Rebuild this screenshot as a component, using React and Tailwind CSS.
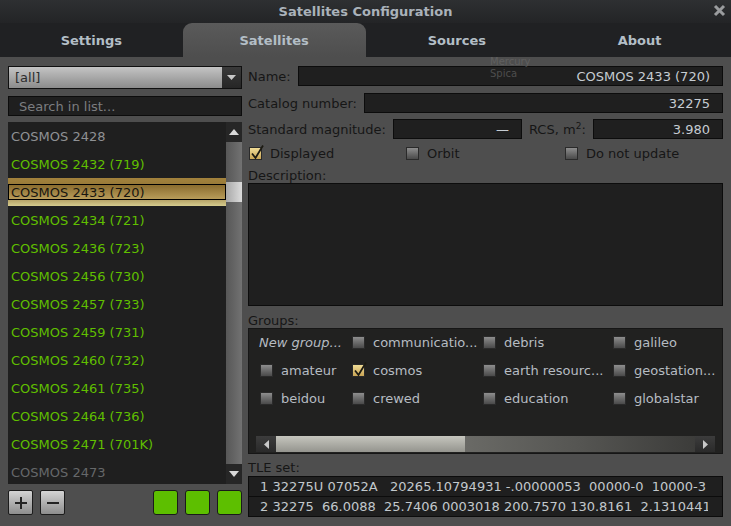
import React from 'react';

const satellites = [
  { name: 'COSMOS 2428', tone: 'grey' },
  { name: 'COSMOS 2432 (719)', tone: 'green' },
  { name: 'COSMOS 2433 (720)', tone: 'selected' },
  { name: 'COSMOS 2434 (721)', tone: 'green' },
  { name: 'COSMOS 2436 (723)', tone: 'green' },
  { name: 'COSMOS 2456 (730)', tone: 'green' },
  { name: 'COSMOS 2457 (733)', tone: 'green' },
  { name: 'COSMOS 2459 (731)', tone: 'green' },
  { name: 'COSMOS 2460 (732)', tone: 'green' },
  { name: 'COSMOS 2461 (735)', tone: 'green' },
  { name: 'COSMOS 2464 (736)', tone: 'green' },
  { name: 'COSMOS 2471 (701K)', tone: 'green' },
  { name: 'COSMOS 2473', tone: 'dim' },
];

const groups = [
  { label: 'New group...', italic: true },
  { label: 'communicatio...' },
  { label: 'debris' },
  { label: 'galileo' },
  { label: 'amateur' },
  { label: 'cosmos', checked: true },
  { label: 'earth resourc...' },
  { label: 'geostation...' },
  { label: 'beidou' },
  { label: 'crewed' },
  { label: 'education' },
  { label: 'globalstar' },
];

const tle = [
  '1 32275U 07052A   20265.10794931 -.00000053  00000-0  10000-3',
  '2 32275  66.0088  25.7406 0003018 200.7570 130.8161  2.13104411',
];

const CheckBox = ({ checked }) => (
  <div
    className={
      'relative w-[13px] h-[13px] shrink-0 border border-[#2a2a2a] ' +
      (checked
        ? 'bg-gradient-to-b from-[#f0dc96] to-[#c9a554]'
        : 'bg-gradient-to-b from-[#8e8e8e] to-[#4a4a4a]')
    }
  >
    {checked && (
      <svg className="absolute -top-[4px] left-0" width="15" height="17" viewBox="0 0 15 17">
        <path d="M2 9.5 L5.5 14 L13 1.5" fill="none" stroke="#1c1a12" strokeWidth="1.8" />
      </svg>
    )}
  </div>
);

const Field = ({ children, className = '' }) => (
  <div
    className={
      'h-[20px] bg-[#1f1f1f] border border-[#0c0c0c] text-[#c6ccd2] flex items-center justify-end pr-[12px] ' +
      className
    }
  >
    {children}
  </div>
);

const SatelliteList = () => (
  <div className="mt-[6px] h-[362px] flex">
    <div className="flex-1 bg-[#1f1f1f] overflow-hidden">
      {satellites.map((s) =>
        s.tone === 'selected' ? (
          <div
            key={s.name}
            className="h-[28px] flex items-center bg-gradient-to-b from-[#a2823c] via-[#8e7236] to-[#d6cc8e]"
          >
            <div className="w-full h-[16px] border border-black flex items-center pl-[2px] text-[#171510] bg-gradient-to-b from-[#8a6c2e] to-[#b89c5a]">
              {s.name}
            </div>
          </div>
        ) : (
          <div
            key={s.name}
            className={
              'h-[28px] flex items-center pl-[3px] ' +
              (s.tone === 'green'
                ? 'text-[#60bf00]'
                : s.tone === 'grey'
                ? 'text-[#8f9194]'
                : 'text-[#66686a]')
            }
          >
            {s.name}
          </div>
        )
      )}
    </div>
    <div className="w-[16px] flex flex-col bg-gradient-to-r from-[#575757] to-[#727272]">
      <div className="h-[20px] bg-[#262626] flex items-center justify-center">
        <svg width="10" height="6" viewBox="0 0 10 6">
          <path d="M0 6 L5 0 L10 6 Z" fill="#d8d8d8" />
        </svg>
      </div>
      <div className="h-[40px]" />
      <div className="h-[20px] bg-gradient-to-r from-[#a8a8a8] to-[#dcdcdc]" />
      <div className="flex-1" />
      <div className="h-[20px] bg-[#262626] flex items-center justify-center">
        <svg width="10" height="6" viewBox="0 0 10 6">
          <path d="M0 0 L5 6 L10 0 Z" fill="#d8d8d8" />
        </svg>
      </div>
    </div>
  </div>
);

export default function App() {
  const tabs = ['Settings', 'Satellites', 'Sources', 'About'];

  return (
    <div className="w-[731px] h-[526px] flex flex-col overflow-hidden bg-[#4e4e4e] font-['DejaVu_Sans',sans-serif] text-[13px] leading-none">
      {/* title bar */}
      <div className="relative h-[23px] shrink-0 flex items-center justify-center bg-gradient-to-b from-[#2e3032] to-[#232426]">
        <span className="font-bold text-[#aab2ba]">Satellites Configuration</span>
        <svg className="absolute right-[5px] top-[4px]" width="13" height="13" viewBox="0 0 13 13">
          <path d="M2 2 L11 11 M11 2 L2 11" stroke="#9a9c9e" strokeWidth="3" />
        </svg>
      </div>

      {/* tabs */}
      <div className="h-[34px] shrink-0 flex bg-[#202123]">
        {tabs.map((t) => (
          <div
            key={t}
            className={
              'flex-1 flex items-center justify-center font-bold text-[#b3bec6] ' +
              (t === 'Satellites'
                ? 'rounded-t-[9px] bg-gradient-to-b from-[#5a5a5a] to-[#4e4e4e]'
                : '')
            }
          >
            {t}
          </div>
        ))}
      </div>

      {/* content */}
      <div className="relative flex-1 flex gap-[6px] px-[8px] pt-[9px]">
        <span className="absolute left-[490px] top-[0px] text-[10px] text-[#6c6c6c] opacity-60">Mercury</span>
        <span className="absolute left-[490px] top-[12px] text-[10px] text-[#6c6c6c] opacity-60">Spica</span>

        {/* left column */}
        <div className="w-[234px] flex flex-col">
          <div className="h-[23px] flex border border-[#101010]">
            <div className="flex-1 flex items-center pl-[6px] text-[#2c2c2c] bg-gradient-to-b from-[#c4c4c4] to-[#8c8c8c]">
              [all]
            </div>
            <div className="w-[19px] flex items-center justify-center bg-gradient-to-b from-[#3a3a3a] to-[#262626]">
              <svg width="9" height="5" viewBox="0 0 9 5">
                <path d="M0 0 L4.5 5 L9 0 Z" fill="#c8c8c8" />
              </svg>
            </div>
          </div>
          <div className="mt-[7px] h-[20px] bg-[#1f1f1f] border border-[#0c0c0c] flex items-center pl-[10px] text-[#7b7d80]">
            Search in list...
          </div>
          <SatelliteList />
          <div className="mt-[6px] flex items-center">
            <div className="w-[25px] h-[25px] rounded-[2px] border border-[#1c1c1c] bg-gradient-to-b from-[#d4d4d4] to-[#8e8e8e] flex items-center justify-center">
              <svg width="14" height="14" viewBox="0 0 14 14">
                <path d="M7 1 V13 M1 7 H13" stroke="#232323" strokeWidth="2" />
              </svg>
            </div>
            <div className="ml-[7px] w-[25px] h-[25px] rounded-[2px] border border-[#1c1c1c] bg-gradient-to-b from-[#d4d4d4] to-[#8e8e8e] flex items-center justify-center">
              <svg width="14" height="14" viewBox="0 0 14 14">
                <path d="M1 7 H13" stroke="#232323" strokeWidth="2" />
              </svg>
            </div>
            <div className="flex-1" />
            <div className="flex gap-[7px]">
              <div className="w-[25px] h-[25px] rounded-[3px] border border-[#1a1a1a] bg-[#5dbf00]" />
              <div className="w-[25px] h-[25px] rounded-[3px] border border-[#1a1a1a] bg-[#5dbf00]" />
              <div className="w-[25px] h-[25px] rounded-[3px] border border-[#1a1a1a] bg-[#5dbf00]" />
            </div>
          </div>
        </div>

        {/* right column */}
        <div className="w-[475px] flex flex-col text-[#161616]">
          <div className="flex items-center gap-[7px]">
            <span>Name:</span>
            <Field className="flex-1">COSMOS 2433 (720)</Field>
          </div>
          <div className="mt-[7px] flex items-center gap-[7px]">
            <span>Catalog number:</span>
            <Field className="flex-1">32275</Field>
          </div>
          <div className="mt-[6px] flex items-center gap-[7px]">
            <span>Standard magnitude:</span>
            <Field className="w-[129px]">—</Field>
            <span>
              RCS, m<sup className="text-[9px]">2</sup>:
            </span>
            <Field className="flex-1">3.980</Field>
          </div>
          <div className="mt-[7px] h-[14px] flex items-center">
            <div className="w-[158px] flex items-center gap-[8px] pl-[1px]">
              <CheckBox checked />
              <span>Displayed</span>
            </div>
            <div className="w-[159px] flex items-center gap-[8px]">
              <CheckBox />
              <span>Orbit</span>
            </div>
            <div className="flex items-center gap-[8px]">
              <CheckBox />
              <span>Do not update</span>
            </div>
          </div>
          <div className="mt-[9px]">Description:</div>
          <div className="mt-[1px] h-[123px] bg-[#1f1f1f] border border-[#0c0c0c]" />
          <div className="mt-[8px]">Groups:</div>
          <div className="mt-[1px] h-[126px] bg-[#212120] border border-[#161616] flex flex-col pl-[11px] pr-[7px] pb-[1px]">
            <div className="grid grid-cols-[92px_131px_130px_1fr] text-[#b6bcc2] -mt-[1px]">
              {groups.map((g) => (
                <div key={g.label} className="h-[28px] flex items-center gap-[8px] whitespace-nowrap">
                  {g.italic ? (
                    <span className="italic -ml-[1px]">{g.label}</span>
                  ) : (
                    <>
                      <CheckBox checked={g.checked} />
                      <span>{g.label}</span>
                    </>
                  )}
                </div>
              ))}
            </div>
            <div className="flex-1" />
            <div className="-ml-[4px] h-[16px] flex">
              <div className="w-[20px] bg-gradient-to-b from-[#3c3c3c] to-[#2a2a2a] flex items-center justify-center">
                <svg width="5" height="9" viewBox="0 0 5 9">
                  <path d="M5 0 L0 4.5 L5 9 Z" fill="#c8c8c8" />
                </svg>
              </div>
              <div className="w-[189px] bg-gradient-to-b from-[#c6c6be] to-[#94948e]" />
              <div className="flex-1 bg-gradient-to-r from-[#6a6a66] via-[#555552] to-[#3c3c3a]" />
              <div className="w-[20px] bg-gradient-to-b from-[#3c3c3c] to-[#2a2a2a] flex items-center justify-center">
                <svg width="5" height="9" viewBox="0 0 5 9">
                  <path d="M0 0 L5 4.5 L0 9 Z" fill="#c8c8c8" />
                </svg>
              </div>
            </div>
          </div>
          <div className="mt-[7px]">TLE set:</div>
          <div className="mt-[2px] flex flex-col border border-[#0c0c0c] bg-[#0c0c0c] gap-[1px] text-[#c2c8cc]">
            {tle.map((line) => (
              <div key={line} className="h-[19px] bg-[#1f1f1f] flex items-center pl-[11px] pr-[14px]">
                <div className="flex-1 overflow-hidden whitespace-pre">{line}</div>
              </div>
            ))}
          </div>
        </div>
      </div>
    </div>
  );
}
